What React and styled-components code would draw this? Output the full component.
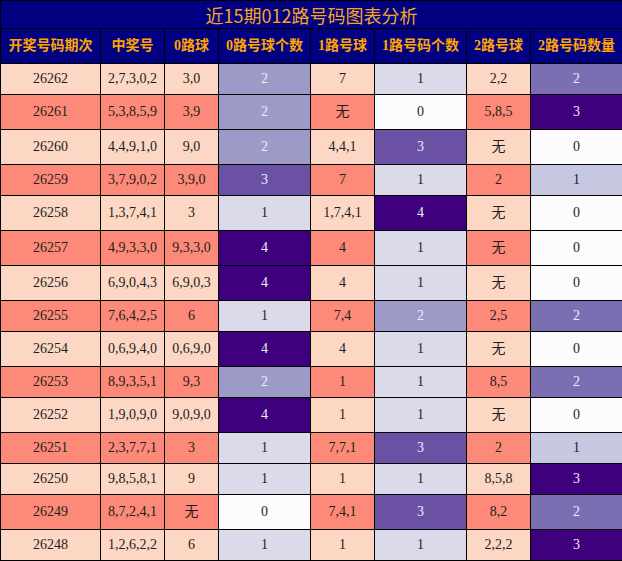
import React from "react";
import styled, { createGlobalStyle } from "styled-components";

const Global = createGlobalStyle`
  html, body { margin: 0; padding: 0; background: #ffffff; }
  body { font-family: "Liberation Serif", "Noto Sans CJK SC", serif; }
`;

const Table = styled.table`
  width: 622px;
  table-layout: fixed;
  border-collapse: collapse;
  font-family: "Liberation Serif", "Noto Sans CJK SC", serif;
`;

const TitleCell = styled.th`
  height: 27px;
  padding: 0;
  background: #000080;
  color: #f5a623;
  font-family: "Noto Sans CJK SC", sans-serif;
  font-weight: normal;
  font-size: 18px;
  line-height: 20px;
  text-align: center;
  border: 1px solid #000;
`;

const HeadCell = styled.th`
  height: 34px;
  padding: 0;
  background: #000080;
  color: #ffa500;
  font-weight: bold;
  font-size: 14px;
  line-height: 18px;
  text-align: center;
  border: 1px solid #000;
  white-space: nowrap;
`;

const Row = styled.tr`
  height: ${(p) => (p.$tall ? 35 : 31)}px;
`;

const Cell = styled.td`
  padding: 0;
  background: ${(p) => p.$bg};
  color: ${(p) => (p.$light ? "#efeef6" : "#1e1e1e")};
  font-size: 14px;
  line-height: 18px;
  text-align: center;
  border: 1px solid #000;
  white-space: nowrap;
`;

const PEACH = "#fcd7c4";
const SALMON = "#fd8a78";
const WHITE = "#fcfbfd";

const countScale = {
  0: [WHITE, false],
  1: ["#dadaeb", false],
  2: ["#9e9ac8", true],
  3: ["#6a51a3", true],
  4: ["#3f007d", true],
};
const twoScale = {
  0: [WHITE, false],
  1: ["#c6c7e1", false],
  2: ["#7a6fb2", true],
  3: ["#3f007d", true],
};

const widths = [100, 64, 54, 92, 64, 92, 64, 92];
const headers = [
  "开奖号码期次",
  "中奖号",
  "0路球",
  "0路号球个数",
  "1路号球",
  "1路号码个数",
  "2路号球",
  "2路号码数量",
];

const data = [
  ["26262", "2,7,3,0,2", "3,0", 2, "7", 1, "2,2", 2],
  ["26261", "5,3,8,5,9", "3,9", 2, "无", 0, "5,8,5", 3],
  ["26260", "4,4,9,1,0", "9,0", 2, "4,4,1", 3, "无", 0],
  ["26259", "3,7,9,0,2", "3,9,0", 3, "7", 1, "2", 1],
  ["26258", "1,3,7,4,1", "3", 1, "1,7,4,1", 4, "无", 0],
  ["26257", "4,9,3,3,0", "9,3,3,0", 4, "4", 1, "无", 0],
  ["26256", "6,9,0,4,3", "6,9,0,3", 4, "4", 1, "无", 0],
  ["26255", "7,6,4,2,5", "6", 1, "7,4", 2, "2,5", 2],
  ["26254", "0,6,9,4,0", "0,6,9,0", 4, "4", 1, "无", 0],
  ["26253", "8,9,3,5,1", "9,3", 2, "1", 1, "8,5", 2],
  ["26252", "1,9,0,9,0", "9,0,9,0", 4, "1", 1, "无", 0],
  ["26251", "2,3,7,7,1", "3", 1, "7,7,1", 3, "2", 1],
  ["26250", "9,8,5,8,1", "9", 1, "1", 1, "8,5,8", 3],
  ["26249", "8,7,2,4,1", "无", 0, "7,4,1", 3, "8,2", 2],
  ["26248", "1,2,6,2,2", "6", 1, "1", 1, "2,2,2", 3],
];

export default function App() {
  return (
    <>
      <Global />
      <Table>
        <colgroup>
          {widths.map((w, i) => (
            <col key={i} style={{ width: w }} />
          ))}
        </colgroup>
        <thead>
          <tr>
            <TitleCell colSpan={8}>近15期012路号码图表分析</TitleCell>
          </tr>
          <tr>
            {headers.map((h) => (
              <HeadCell key={h}>{h}</HeadCell>
            ))}
          </tr>
        </thead>
        <tbody>
          {data.map((r, i) => {
            const base = i % 2 === 0 ? PEACH : SALMON;
            const tall = r.includes("无");
            const [c4, l4] = countScale[r[3]];
            const [c6, l6] = countScale[r[5]];
            const [c8, l8] = twoScale[r[7]];
            return (
              <Row key={r[0]} $tall={tall}>
                <Cell $bg={base}>{r[0]}</Cell>
                <Cell $bg={base}>{r[1]}</Cell>
                <Cell $bg={base}>{r[2]}</Cell>
                <Cell $bg={c4} $light={l4}>{r[3]}</Cell>
                <Cell $bg={base}>{r[4]}</Cell>
                <Cell $bg={c6} $light={l6}>{r[5]}</Cell>
                <Cell $bg={base}>{r[6]}</Cell>
                <Cell $bg={c8} $light={l8}>{r[7]}</Cell>
              </Row>
            );
          })}
        </tbody>
      </Table>
    </>
  );
}
